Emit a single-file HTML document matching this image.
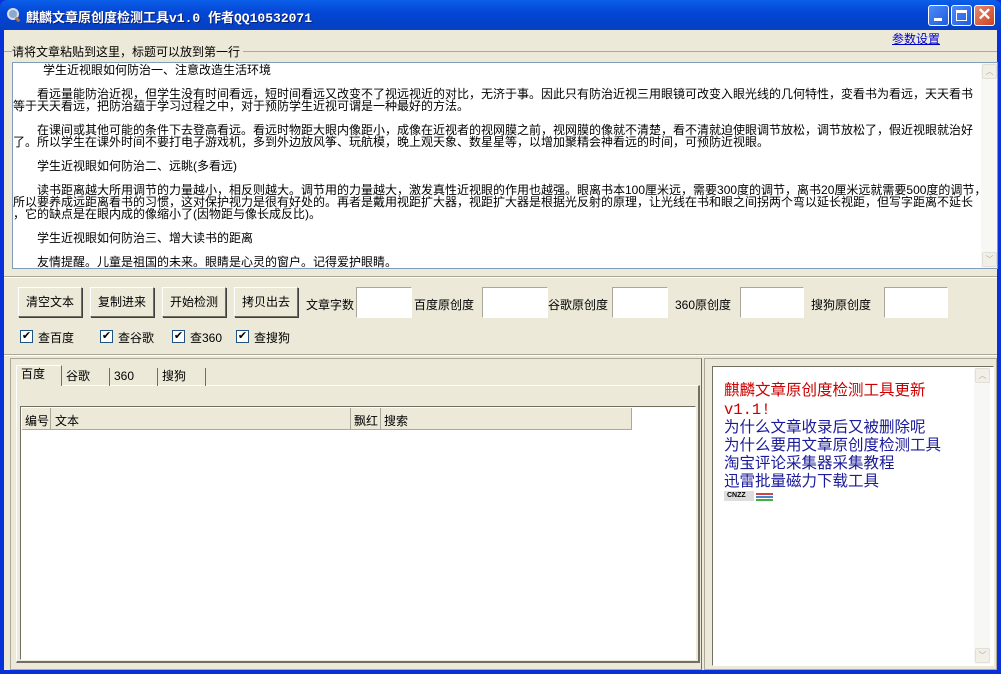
<!DOCTYPE html>
<html><head><meta charset="utf-8"><style>
*{margin:0;padding:0;box-sizing:border-box}
body{width:1001px;height:674px;overflow:hidden;background:#0831d9;font-family:"Liberation Sans","Noto Sans CJK SC",sans-serif;font-size:12px;color:#000;position:relative}
.abs{position:absolute}
#title{left:0;top:0;width:1001px;height:30px;background:linear-gradient(#0a5fe8,#0447d6 40%,#0342c8 80%,#0a3fc0);border-radius:7px 7px 0 0}
#ttext{left:26px;top:7px;color:#fff;font-weight:bold;font-size:13px;font-family:"Liberation Mono","Noto Sans CJK SC",monospace;text-shadow:1px 1px #0a1e6e;white-space:nowrap}
#client{left:4px;top:30px;width:993px;height:640px;background:#ece9d8}
.tb{top:5px;width:21px;height:21px;border:1px solid #fff;border-radius:3px;background:linear-gradient(135deg,#4d8bf7,#1f5be0)}
.txt{white-space:nowrap;position:absolute;left:14px;font-size:12px;line-height:12px}
.btn{position:absolute;top:287px;width:64px;height:30px;border:1px solid #fff;border-right-color:#716f64;border-bottom-color:#716f64;box-shadow:1px 1px 0 #404040;background:#ece9d8;text-align:center;line-height:28px}
.inp{position:absolute;top:287px;height:31px;background:#fff;border:1px solid #aca899;border-right-color:#fff;border-bottom-color:#fff}
.lbl{position:absolute;top:296px;white-space:nowrap}
.cb{position:absolute;top:330px;width:13px;height:13px;border:1px solid #1c5180;background:#fff;font-size:11px;line-height:11px;text-align:center}
.cbl{position:absolute;top:329px;white-space:nowrap}
.tab{position:absolute;top:368px;height:18px;border-right:1px solid #716f64;padding-left:4px;line-height:16px}
.sa{position:absolute;width:15px;height:15px;border:1px solid #e0dfd8;background:#f1efe6;border-radius:2px;color:#aaa;font-size:8px;text-align:center;line-height:13px}
</style></head><body>
<div id="title" class="abs"></div>
<div class="abs" style="left:7px;top:8px;width:12px;height:12px;border:2px solid #dde;border-radius:50%;background:#8ac"></div>
<div class="abs" style="left:15px;top:18px;width:5px;height:3px;background:#a74;transform:rotate(45deg)"></div>
<div id="ttext" class="abs">麒麟文章原创度检测工具v1.0 作者QQ10532071</div>
<div class="abs tb" style="left:928px"><div class="abs" style="left:5px;top:12px;width:8px;height:3px;background:#fff"></div></div>
<div class="abs tb" style="left:951px"><div class="abs" style="left:4px;top:4px;width:11px;height:11px;border:1px solid #fff;border-top-width:3px"></div></div>
<div class="abs tb" style="left:974px;background:linear-gradient(135deg,#e98a6e,#c9421f);color:#fff;font-size:17px;line-height:18px;text-align:center;font-weight:bold">✕</div>
<div id="client" class="abs"></div>
<div class="abs" style="left:892px;top:30px;color:#00c;text-decoration:underline;white-space:nowrap">参数设置</div>
<div class="abs" style="left:4px;top:51px;width:993px;height:1px;background:#aca899"></div>
<div class="abs" style="left:12px;top:43px;background:#ece9d8;padding-right:3px;white-space:nowrap">请将文章粘贴到这里，标题可以放到第一行</div>
<div class="abs" style="left:12px;top:62px;width:986px;height:207px;background:#fff;border:1px solid #7f9db9;overflow:hidden">
<div class="txt" style="left:30px;top:1px">学生近视眼如何防治一、注意改造生活环境</div>
<div class="txt" style="left:24px;top:25px">看远量能防治近视，但学生没有时间看远，短时间看远又改变不了视远视近的对比，无济于事。因此只有防治近视三用眼镜可改变入眼光线的几何特性，変看书为看远，天天看书</div>
<div class="txt" style="left:0;top:37px">等于天天看远，把防治蕴于学习过程之中，对于预防学生近视可谓是一种最好的方法。</div>
<div class="txt" style="left:24px;top:61px">在课间或其他可能的条件下去登高看远。看远时物距大眼内像距小，成像在近视者的视网膜之前，视网膜的像就不清楚，看不清就迫使眼调节放松，调节放松了，假近视眼就治好</div>
<div class="txt" style="left:0;top:73px">了。所以学生在课外时间不要打电子游戏机，多到外边放风筝、玩航模，晚上观天象、数星星等，以增加聚精会神看远的时间，可预防近视眼。</div>
<div class="txt" style="left:24px;top:97px">学生近视眼如何防治二、远眺(多看远)</div>
<div class="txt" style="left:24px;top:121px">读书距离越大所用调节的力量越小，相反则越大。调节用的力量越大，激发真性近视眼的作用也越强。眼离书本100厘米远，需要300度的调节，离书20厘米远就需要500度的调节，</div>
<div class="txt" style="left:0;top:133px">所以要养成远距离看书的习惯，这对保护视力是很有好处的。再者是戴用视距扩大器，视距扩大器是根据光反射的原理，让光线在书和眼之间拐两个弯以延长视距，但写字距离不延长</div>
<div class="txt" style="left:0;top:145px">，它的缺点是在眼内成的像缩小了(因物距与像长成反比)。</div>
<div class="txt" style="left:24px;top:169px">学生近视眼如何防治三、增大读书的距离</div>
<div class="txt" style="left:24px;top:193px">友情提醒。儿童是祖国的未来。眼睛是心灵的窗户。记得爱护眼睛。</div>
<div class="abs" style="right:0;top:0;width:16px;height:205px;background:#f7f7f3"></div>
<div class="sa" style="right:0;top:1px">︿</div>
<div class="sa" style="right:0;top:189px">﹀</div>
</div>
<div class="abs" style="left:4px;top:276px;width:993px;height:2px;border-top:1px solid #aca899;border-bottom:1px solid #fff"></div>
<div class="btn" style="left:18px">清空文本</div>
<div class="btn" style="left:90px">复制进来</div>
<div class="btn" style="left:162px">开始检测</div>
<div class="btn" style="left:234px">拷贝出去</div>
<div class="lbl" style="left:306px">文章字数</div><div class="inp" style="left:356px;width:56px"></div>
<div class="lbl" style="left:414px">百度原创度</div><div class="inp" style="left:482px;width:66px"></div>
<div class="lbl" style="left:548px">谷歌原创度</div><div class="inp" style="left:612px;width:56px"></div>
<div class="lbl" style="left:675px">360原创度</div><div class="inp" style="left:740px;width:64px"></div>
<div class="lbl" style="left:811px">搜狗原创度</div><div class="inp" style="left:884px;width:64px"></div>
<div class="cb" style="left:20px">✔</div><div class="cbl" style="left:38px">查百度</div>
<div class="cb" style="left:100px">✔</div><div class="cbl" style="left:118px">查谷歌</div>
<div class="cb" style="left:172px">✔</div><div class="cbl" style="left:190px">查360</div>
<div class="cb" style="left:236px">✔</div><div class="cbl" style="left:254px">查搜狗</div>
<div class="abs" style="left:4px;top:354px;width:993px;height:2px;border-top:1px solid #aca899;border-bottom:1px solid #fff"></div>
<div class="abs" style="left:10px;top:358px;width:692px;height:312px;border:1px solid #aca899;border-right-color:#716f64"></div>
<div class="abs" style="left:16px;top:385px;width:684px;height:278px;border:1px solid #fff;border-right:2px solid #716f64;border-bottom:2px solid #716f64"></div>
<div class="tab" style="left:16px;top:365px;width:46px;height:21px;background:#ece9d8;border:1px solid #fff;border-right:1px solid #716f64;border-bottom:none">百度</div>
<div class="tab" style="left:62px;width:48px">谷歌</div>
<div class="tab" style="left:110px;width:48px">360</div>
<div class="tab" style="left:158px;width:48px">搜狗</div>
<div class="abs" style="left:20px;top:406px;width:676px;height:254px;background:#fff;border:1px solid #716f64;border-right-color:#fff;border-bottom-color:#fff"></div>
<div class="abs" style="left:22px;top:408px;width:610px;height:22px;background:#ece9d8;border-bottom:1px solid #aca899"></div>
<div class="abs" style="left:25px;top:412px">编号</div>
<div class="abs" style="left:50px;top:408px;width:1px;height:21px;background:#aca899"></div>
<div class="abs" style="left:55px;top:412px">文本</div>
<div class="abs" style="left:350px;top:408px;width:1px;height:21px;background:#aca899"></div>
<div class="abs" style="left:354px;top:412px">飘红</div>
<div class="abs" style="left:380px;top:408px;width:1px;height:21px;background:#aca899"></div>
<div class="abs" style="left:384px;top:412px">搜索</div>
<div class="abs" style="left:631px;top:408px;width:1px;height:22px;background:#aca899"></div>
<div class="abs" style="left:704px;top:358px;width:293px;height:312px;border:1px solid #aca899"></div>
<div class="abs" style="left:712px;top:366px;width:282px;height:300px;background:#fff;border:1px solid #716f64;border-right-color:#fff;border-bottom-color:#fff"></div>
<div class="abs" style="left:974px;top:368px;width:16px;height:296px;background:#f7f7f3"></div>
<div class="sa" style="left:975px;top:368px">︿</div>
<div class="sa" style="left:975px;top:648px">﹀</div>
<div class="abs" style="left:724px;top:382px;font-size:15.5px;line-height:18px;white-space:nowrap;color:#c00">麒麟文章原创度检测工具更新</div>
<div class="abs" style="left:724px;top:401px;font-size:15.5px;line-height:18px;color:#c00;font-family:'Liberation Mono',monospace">v1.1!</div>
<div class="abs" style="left:724px;top:419px;font-size:15.5px;line-height:18px;white-space:nowrap;color:#1a1a9a">为什么文章收录后又被删除呢<br>为什么要用文章原创度检测工具<br>淘宝评论采集器采集教程<br>迅雷批量磁力下载工具</div>
<div class="abs" style="left:724px;top:491px;width:30px;height:10px;background:#ddd;font-size:7px;line-height:10px;font-weight:bold;padding-left:3px">CNZZ</div>
<div class="abs" style="left:756px;top:493px;width:17px;height:2px;background:#c44"></div>
<div class="abs" style="left:756px;top:496px;width:17px;height:2px;background:#48c"></div>
<div class="abs" style="left:756px;top:499px;width:17px;height:2px;background:#4a4"></div>
</body></html>
